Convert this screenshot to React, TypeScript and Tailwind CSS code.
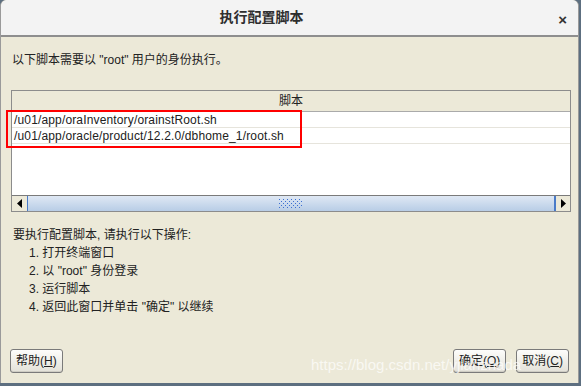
import React from 'react';

const cjk = '"Liberation Sans", "Noto Sans CJK SC", sans-serif';

const scripts = [
  '/u01/app/oraInventory/orainstRoot.sh',
  '/u01/app/oracle/product/12.2.0/dbhome_1/root.sh',
];

const steps = ['打开终端窗口', '以 "root" 身份登录', '运行脚本', '返回此窗口并单击 "确定" 以继续'];

const Btn: React.FC<{ label: string; hot: string; className?: string }> = ({ label, hot, className }) => (
  <button
    className={`h-[24px] rounded-[3px] border border-[#7a7a7a] bg-gradient-to-b from-[#fdfdfb] to-[#e3e1d8] px-[5px] text-[12px] text-[#222] shadow-[inset_0_-1px_0_#cfcdc4] ${className || ''}`}
  >
    {label}(<span className="underline">{hot}</span>)
  </button>
);

export default function App() {
  return (
    <div className="h-[386px] w-[581px] overflow-hidden bg-[#5d6f80]" style={{ fontFamily: cjk }}>
      <div className="relative flex h-[383px] w-[579px] flex-col rounded-t-[6px] border-x border-[#9a9a9a] bg-[#ece9d8]">
        {/* title bar */}
        <div className="flex h-[37px] shrink-0 items-center justify-center rounded-t-[6px] border-b-2 border-[#8e8e8e] bg-[#f3f3f3] pr-[56px]">
          <span className="text-[14px] font-bold text-[#2e2e2e]">执行配置脚本</span>
          <span className="absolute right-[11px] top-[9px] text-[15px] font-bold text-[#333]">×</span>
        </div>

        <div className="px-[11px] pt-[14px] text-[12px] text-[#222]">以下脚本需要以 "root" 用户的身份执行。</div>

        {/* scripts table */}
        <div className="ml-[10px] mt-[21px] flex h-[122px] w-[560px] flex-col border border-[#8c8c8c]">
          <div className="flex h-[21px] shrink-0 items-center justify-center border-b border-[#aaa] text-[12px] text-[#222]">脚本</div>
          <div className="flex-1 bg-white">
            {scripts.map((s) => (
              <div
                key={s}
                className="flex h-[16px] items-center border-b border-[#e6e4dc] pl-[2px] text-[12px] tracking-[0.15px] text-[#222]"
                style={{ fontFamily: '"Liberation Sans", sans-serif' }}
              >
                {s}
              </div>
            ))}
          </div>
          {/* horizontal scrollbar */}
          <div className="flex h-[16px] shrink-0 border-t border-[#7a7a7a] bg-[#ece9d8]">
            <div className="flex w-[16px] items-center justify-center border-r border-[#4a7bc8]">
              <svg width="6" height="9" viewBox="0 0 6 9"><path d="M5 0v9L0 4.5z" fill="#000" /></svg>
            </div>
            <div className="flex flex-1 items-center justify-center bg-gradient-to-b from-[#dfe8f4] to-[#b8cde6]">
              <svg width="24" height="10" viewBox="0 0 24 10">
                {[0, 4, 8, 12, 16, 20].map((x) =>
                  [1, 5, 9].map((y) => <rect key={`${x}-${y}`} x={x} y={y - 1} width="1" height="1" fill="#3c6fd1" />),
                )}
                {[2, 6, 10, 14, 18, 22].map((x) =>
                  [3, 7].map((y) => <rect key={`b${x}-${y}`} x={x} y={y - 1} width="1" height="1" fill="#3c6fd1" />),
                )}
              </svg>
            </div>
            <div className="flex w-[16px] items-center justify-center border-l-2 border-[#4a7bc8]">
              <svg width="6" height="9" viewBox="0 0 6 9"><path d="M1 0v9l5-4.5z" fill="#000" /></svg>
            </div>
          </div>
        </div>

        {/* instructions */}
        <div className="px-[12px] pt-[14px] text-[12px] leading-[18px] text-[#222]">
          <div>要执行配置脚本, 请执行以下操作:</div>
          {steps.map((s, i) => (
            <div key={s} className="pl-[16px]">
              {i + 1}. {s}
            </div>
          ))}
        </div>

        {/* buttons */}
        <div className="mt-auto flex items-center px-[9px] pb-[10px]">
          <Btn label="帮助" hot="H" />
          <div className="flex-1" />
          <Btn label="确定" hot="O" className="mr-[10px]" />
          <Btn label="取消" hot="C" />
        </div>

        {/* red annotation box */}
        <div className="absolute left-[5px] top-[110px] h-[38px] w-[296px] border-2 border-[#f00]" />

        {/* watermark */}
        <div
          className="pointer-events-none absolute left-[310px] top-[354px] text-[15px] text-white/70"
          style={{ fontFamily: '"Liberation Sans", sans-serif' }}
        >
          https://blog.csdn.net/yjianzhada
        </div>
      </div>
    </div>
  );
}
